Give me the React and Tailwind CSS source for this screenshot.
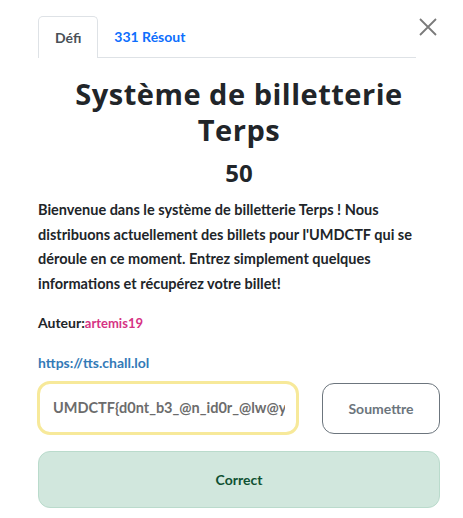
export default function App() {
  return (
    <div className="relative w-[463px] h-[518px] bg-white text-[#212529]" style={{ fontFamily: "Lato, 'Open Sans', sans-serif" }}>
      <button className="absolute left-[419px] top-[18px] w-[18px] h-[18px] text-[#7a7a7a]">
        <svg viewBox="0 0 18 18" width="18" height="18" fill="none" stroke="currentColor" strokeWidth="1.8">
          <path d="M1 1 L17 17 M17 1 L1 17" />
        </svg>
      </button>

      <div className="pl-[38px] pr-[23px] pt-[15px]">
        <div className="flex items-end border-b border-[#dee2e6] w-[378px]">
          <div className="h-[42px] px-[16px] flex items-center border border-b-0 border-[#dee2e6] rounded-t-[5px] bg-white -mb-px text-[14px] font-bold text-[#495057]">
            Défi
          </div>
          <div className="h-[42px] px-[16px] flex items-center text-[14px] font-bold text-[#0d6efd]">
            331 Résout
          </div>
        </div>

        <h1 className="mt-[18px] text-center text-[29px] leading-[36px] font-bold tracking-[0.5px] text-[#212529]" style={{ fontFamily: "'Open Sans', sans-serif" }}>
          Système de billetterie<br />Terps
        </h1>
        <div className="mt-[10px] text-center text-[24px] leading-[30px] font-bold" style={{ fontFamily: "'Open Sans', sans-serif" }}>50</div>

        <p className="mt-[10px] text-[14.5px] leading-[24.5px] font-bold text-[#212529]">
          Bienvenue dans le système de billetterie Terps ! Nous<br />
          distribuons actuellement des billets pour l'UMDCTF qui se<br />
          déroule en ce moment. Entrez simplement quelques<br />
          informations et récupérez votre billet!
        </p>

        <p className="mt-[15px] text-[14px] leading-[24px] font-bold">
          Auteur:<span className="text-[#d63384] text-[13px]">artemis19</span>
        </p>

        <p className="mt-[16px] text-[14px] leading-[24px] font-bold">
          <a className="text-[#337ab7]">https://tts.chall.lol</a>
        </p>

        <div className="mt-[6px] flex items-center">
          <div className="w-[262px] h-[54px] rounded-[13px] border-[3px] border-[#f7e99a] flex items-center pl-[13px] pr-[11px] overflow-hidden -ml-px">
            <span className="block whitespace-nowrap overflow-hidden text-[14.5px] font-bold text-[#6c6c6c]">UMDCTF{"{"}d0nt_b3_@n_id0r_@lw@ys</span>
          </div>
          <button className="ml-[23px] w-[118px] h-[51px] rounded-[12px] border border-[#6c757d] text-[14px] font-bold text-[#6c757d]">
            Soumettre
          </button>
        </div>

        <div className="mt-[16px] h-[57px] w-[402px] rounded-[12px] bg-[#d1e7dd] border border-[#badbcc] flex items-center justify-center text-[14px] font-bold text-[#0f5132]">
          Correct
        </div>
      </div>
    </div>
  );
}
